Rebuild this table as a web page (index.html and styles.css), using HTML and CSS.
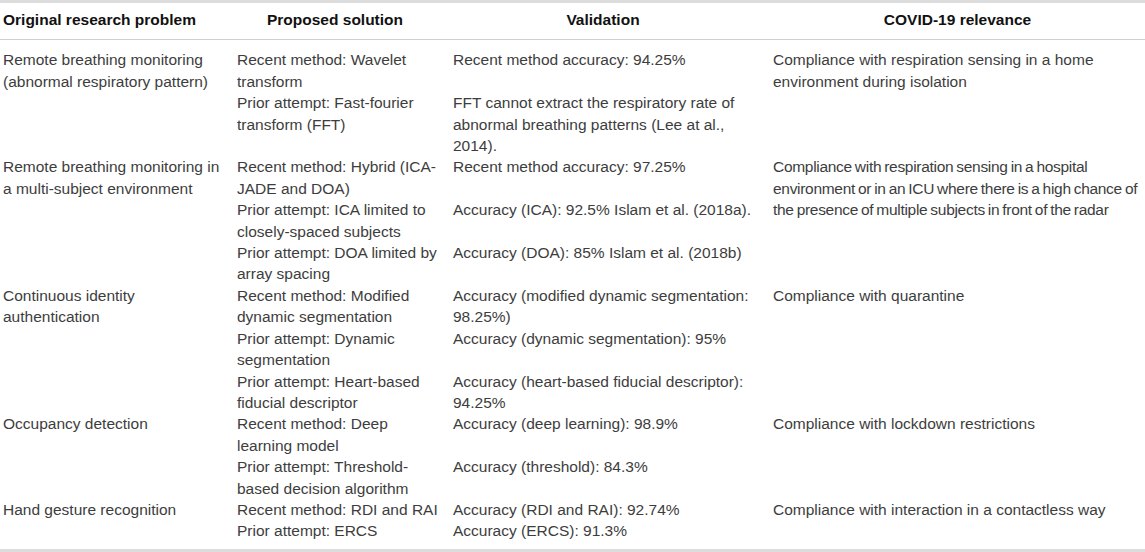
FILE: index.html
```html
<!DOCTYPE html>
<html lang="en">
<head>
    <meta charset="UTF-8">
    <meta name="viewport" content="width=device-width, initial-scale=1.0">
    <title>Radar sensing and COVID-19 relevance</title>
    <link rel="stylesheet" href="styles.css">
</head>
<body>
    <table class="research">
        <colgroup>
            <col class="c-problem">
            <col class="c-solution">
            <col class="c-validation">
            <col class="c-relevance">
        </colgroup>
        <thead>
            <tr>
                <th class="left">Original research problem</th>
                <th class="mid">Proposed solution</th>
                <th class="mid">Validation</th>
                <th>COVID-19 relevance</th>
            </tr>
        </thead>
        <tbody>
            <tr class="first">
                <td rowspan="2">Remote breathing monitoring (abnormal respiratory pattern)</td>
                <td>Recent method: Wavelet transform</td>
                <td>Recent method accuracy: 94.25%</td>
                <td rowspan="2" class="wide">Compliance with respiration sensing in a home environment during isolation</td>
            </tr>
            <tr>
                <td>Prior attempt: Fast-fourier transform (FFT)</td>
                <td>FFT cannot extract the respiratory rate of abnormal breathing patterns (Lee at al., 2014).</td>
            </tr>

            <tr>
                <td rowspan="3">Remote breathing monitoring in a multi-subject environment</td>
                <td>Recent method: Hybrid (ICA-JADE and DOA)</td>
                <td>Recent method accuracy: 97.25%</td>
                <td rowspan="3" class="wide tight">Compliance with respiration sensing in a hospital environment or in an ICU where there is a high chance of the presence of multiple subjects in front of the radar</td>
            </tr>
            <tr>
                <td>Prior attempt: ICA limited to closely-spaced subjects</td>
                <td>Accuracy (ICA): 92.5% Islam et al. (2018a).</td>
            </tr>
            <tr>
                <td>Prior attempt: DOA limited by array spacing</td>
                <td>Accuracy (DOA): 85% Islam et al. (2018b)</td>
            </tr>

            <tr>
                <td rowspan="3">Continuous identity authentication</td>
                <td>Recent method: Modified dynamic segmentation</td>
                <td>Accuracy (modified dynamic segmentation: 98.25%)</td>
                <td rowspan="3" class="wide">Compliance with quarantine</td>
            </tr>
            <tr>
                <td>Prior attempt: Dynamic segmentation</td>
                <td>Accuracy (dynamic segmentation): 95%</td>
            </tr>
            <tr>
                <td>Prior attempt: Heart-based fiducial descriptor</td>
                <td>Accuracy (heart-based fiducial descriptor): 94.25%</td>
            </tr>

            <tr>
                <td rowspan="2">Occupancy detection</td>
                <td>Recent method: Deep learning model</td>
                <td>Accuracy (deep learning): 98.9%</td>
                <td rowspan="2" class="wide">Compliance with lockdown restrictions</td>
            </tr>
            <tr>
                <td>Prior attempt: Threshold-based decision algorithm</td>
                <td>Accuracy (threshold): 84.3%</td>
            </tr>

            <tr>
                <td rowspan="2" class="last">Hand gesture recognition</td>
                <td>Recent method: RDI and RAI</td>
                <td>Accuracy (RDI and RAI): 92.74%</td>
                <td rowspan="2" class="wide last">Compliance with interaction in a contactless way</td>
            </tr>
            <tr class="final">
                <td>Prior attempt: ERCS</td>
                <td>Accuracy (ERCS): 91.3%</td>
            </tr>
        </tbody>
    </table>
</body>
</html>
```

FILE: styles.css
```css
body {
    margin: 0;
    background-color: #ffffff;
    font-family: 'Liberation Sans', Arial, sans-serif;
    font-size: 15.5px;
    line-height: 21.4px;
    color: #3d3d3d;
}
.research {
    width: 1145px;
    border-collapse: collapse;
    table-layout: fixed;
    border-top: 3px solid #dcdcdc;
    border-bottom: 3px solid #dcdcdc;
}
.c-problem {
    width: 234px;
}
.c-solution {
    width: 216px;
}
.c-validation {
    width: 320px;
}
.c-relevance {
    width: 375px;
}
th {
    font-weight: bold;
    color: #111;
    text-align: center;
    padding: 6px 3px 9px 3px;
    border-bottom: 1px solid #cfcfcf;
}
th.left {
    text-align: left;
}
th.mid {
    padding-right: 17px;
}
td {
    vertical-align: top;
    padding: 0 12px 0 3px;
}
td.wide {
    padding-right: 0;
}
/* this cell wraps a little later in the original */
td.tight {
    letter-spacing: -0.3px;
    word-spacing: -1px;
}
tr.first td {
    padding-top: 9px;
}
tr.final td,
td.last {
    padding-bottom: 7px;
}
```
